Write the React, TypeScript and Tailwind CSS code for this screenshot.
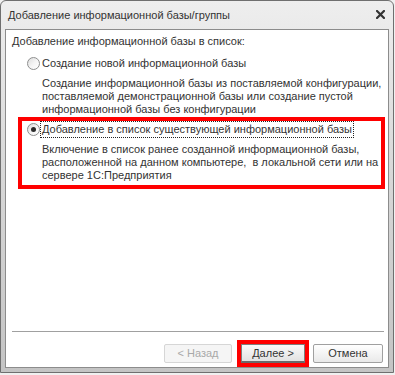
import React, { useState } from 'react';

const font = { fontFamily: '"Liberation Sans", Arial, sans-serif' };

function Radio({ checked }: { checked: boolean }) {
  return (
    <span className="w-[13px] h-[13px] rounded-full border border-[#8e8f8f] bg-gradient-to-br from-[#dcdcdc] via-[#f4f4f4] to-white flex items-center justify-center flex-none">
      {checked && <span className="w-[5px] h-[5px] rounded-full bg-[#2b2b2b]" />}
    </span>
  );
}

interface OptionProps {
  label: string;
  lines: string[];
  checked: boolean;
  focused?: boolean;
  onSelect: () => void;
}

function Option({ label, lines, checked, focused, onSelect }: OptionProps) {
  return (
    <div className="flex flex-col" onClick={onSelect}>
      <div className="flex items-center gap-[1px] h-[13px]">
        <Radio checked={checked} />
        <span
          className={`px-[1px] py-[1px] leading-[13px] whitespace-nowrap ${
            focused ? 'outline outline-1 outline-dotted outline-[#222] -outline-offset-0' : ''
          }`}
        >
          {label}
        </span>
      </div>
      <div className="flex flex-col pl-[15px] pt-[7px] leading-[13px]">
        {lines.map((l) => (
          <span key={l} className="whitespace-pre">{l}</span>
        ))}
      </div>
    </div>
  );
}

export default function App() {
  const [mode, setMode] = useState<'new' | 'existing'>('existing');

  return (
    <div className="w-[395px] h-[375px] bg-[#f0f0f0] text-[11px] text-[#333]" style={font}>
      <div className="w-[394px] h-[373px] flex flex-col rounded-t-[6px] border border-[#6f6f6f] bg-gradient-to-b from-[#eeeeee] via-[#d6d6d6] to-[#c4c4c4] px-[4px] pb-[4px]">
        {/* title bar */}
        <div className="h-[28px] flex-none flex items-center justify-between pl-[3px] pr-[4px]">
          <span className="text-[11px] text-[#333]">Добавление информационной базы/группы</span>
          <svg width="9" height="9" viewBox="0 0 9 9" className="mt-[-1px]">
            <path d="M1 1 L8 8 M8 1 L1 8" stroke="#333" strokeWidth="2.2" strokeLinecap="square" />
          </svg>
        </div>

        {/* content */}
        <div className="flex-1 flex flex-col bg-white border border-[#8c8c8c]">
          <div className="pl-[6px] pt-[5px] leading-[13px]">Добавление информационной базы в список:</div>

          <div className="pl-[21px] pt-[9px]">
            <Option
              label="Создание новой информационной базы"
              checked={mode === 'new'}
              onSelect={() => setMode('new')}
              lines={[
                'Создание информационной базы из поставляемой конфигурации,',
                'поставляемой демонстрационной базы или создание пустой',
                'информационной базы без конфигурации',
              ]}
            />
          </div>

          <div className="ml-[12px] mt-[1px] w-[367px] h-[72px] border-[4px] border-[#ff0000] pl-[5px] pt-[2px]">
            <Option
              label="Добавление в список существующей информационной базы"
              checked={mode === 'existing'}
              focused
              onSelect={() => setMode('existing')}
              lines={[
                'Включение в список ранее созданной информационной базы,',
                'расположенной на данном компьютере,  в локальной сети или на',
                'сервере 1С:Предприятия',
              ]}
            />
          </div>

          <div className="flex-1" />

          <div className="h-px bg-[#a0a0a0] ml-[6px] mr-[4px]" />

          <div className="flex justify-end items-start pt-[8px] pr-[5px] h-[35px]">
            <button className="mt-[4px] w-[68px] h-[19px] border border-[#d6d6d6] rounded-[2px] bg-[#f5f5f5] text-[#a9a9a9] leading-none">
              &lt; Назад
            </button>
            <div className="ml-[5px] border-[4px] border-[#ff0000]">
              <button className="block w-[64px] h-[19px] border border-[#7e7e7e] border-b-[2px] border-b-[#6a6a6a] bg-gradient-to-b from-[#fafafa] to-[#e2e2e2] text-[#333] leading-none">
                Далее &gt;
              </button>
            </div>
            <button className="mt-[4px] ml-[4px] w-[70px] h-[19px] border border-[#a0a0a0] rounded-[2px] bg-gradient-to-b from-white to-[#e9e9e9] text-[#333] leading-none">
              Отмена
            </button>
          </div>
        </div>
      </div>
    </div>
  );
}
